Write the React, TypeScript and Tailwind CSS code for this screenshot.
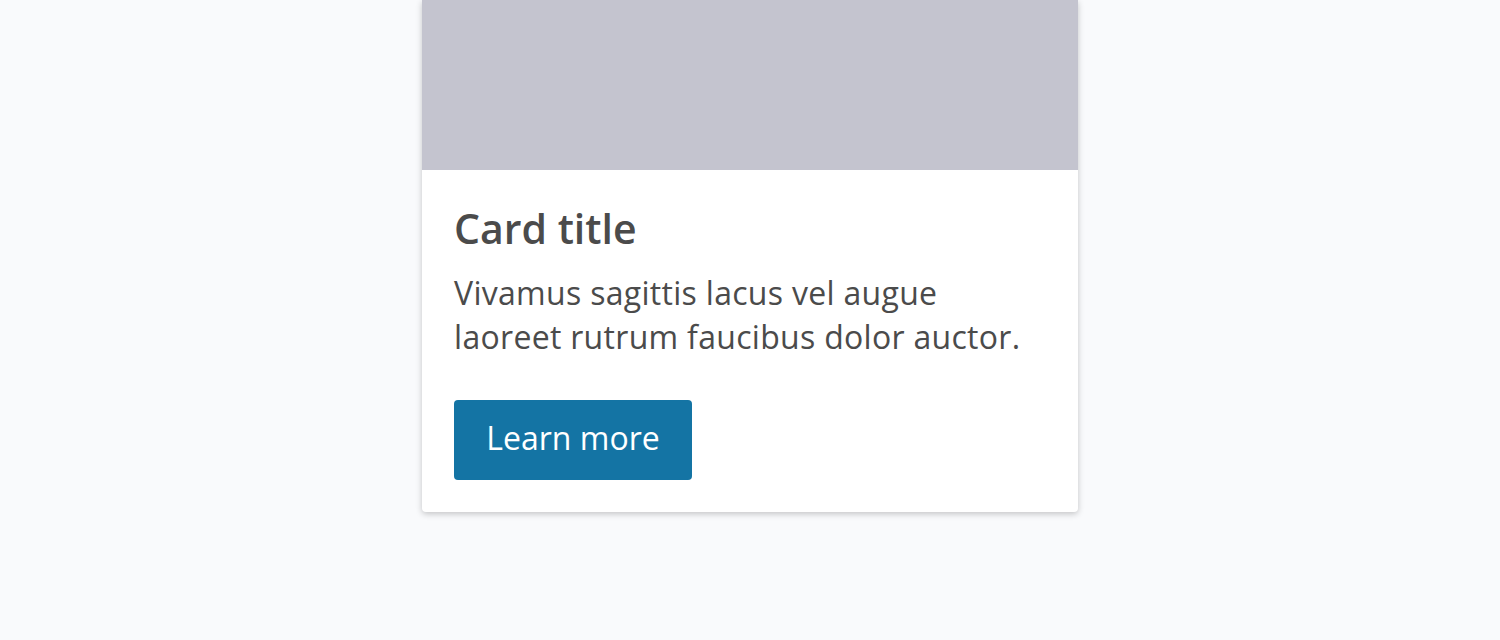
import React from 'react';

const App: React.FC = () => {
  return (
    <div className="min-h-screen bg-[#f9fafc] flex justify-center" style={{ fontFamily: '"Open Sans", Lato, sans-serif' }}>
      <div className="w-[656px] self-start bg-white rounded-b-[4px] shadow-[0_2px_6px_rgba(0,0,0,0.22)] overflow-hidden">
        {/* Image placeholder */}
        <div className="h-[170px] bg-[#c4c4cf]" />

        {/* Content */}
        <div className="px-8 pt-8 pb-8 text-[#4b4b4b]">
          <h2 className="text-[41px] leading-[52px] font-semibold">Card title</h2>
          <p className="mt-[17px] text-[32px] leading-[44px] tracking-[0.3px] whitespace-nowrap">
            Vivamus sagittis lacus vel augue
            <br />
            laoreet rutrum faucibus dolor auctor.
          </p>
          <button className="mt-[41px] h-20 w-[238px] pb-1 rounded-[4px] bg-[#1474a4] text-white text-[32px]">
            Learn more
          </button>
        </div>
      </div>
    </div>
  );
};

export default App;
